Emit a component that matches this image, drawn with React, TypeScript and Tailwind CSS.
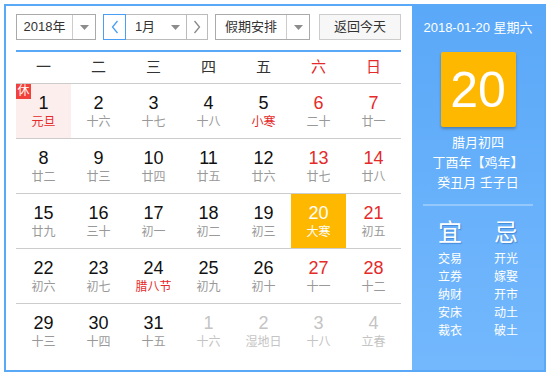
import React from 'react';

type Day = {
  d: number;
  l: string;
  weekend?: boolean;
  fest?: boolean;
  other?: boolean;
  today?: boolean;
  rest?: boolean;
};

const rows: Day[][] = [
  [
    { d: 1, l: '元旦', fest: true, rest: true },
    { d: 2, l: '十六' },
    { d: 3, l: '十七' },
    { d: 4, l: '十八' },
    { d: 5, l: '小寒', fest: true },
    { d: 6, l: '二十', weekend: true },
    { d: 7, l: '廿一', weekend: true },
  ],
  [
    { d: 8, l: '廿二' },
    { d: 9, l: '廿三' },
    { d: 10, l: '廿四' },
    { d: 11, l: '廿五' },
    { d: 12, l: '廿六' },
    { d: 13, l: '廿七', weekend: true },
    { d: 14, l: '廿八', weekend: true },
  ],
  [
    { d: 15, l: '廿九' },
    { d: 16, l: '三十' },
    { d: 17, l: '初一' },
    { d: 18, l: '初二' },
    { d: 19, l: '初三' },
    { d: 20, l: '大寒', today: true },
    { d: 21, l: '初五', weekend: true },
  ],
  [
    { d: 22, l: '初六' },
    { d: 23, l: '初七' },
    { d: 24, l: '腊八节', fest: true },
    { d: 25, l: '初九' },
    { d: 26, l: '初十' },
    { d: 27, l: '十一', weekend: true },
    { d: 28, l: '十二', weekend: true },
  ],
  [
    { d: 29, l: '十三' },
    { d: 30, l: '十四' },
    { d: 31, l: '十五' },
    { d: 1, l: '十六', other: true },
    { d: 2, l: '湿地日', other: true },
    { d: 3, l: '十八', other: true },
    { d: 4, l: '立春', other: true },
  ],
];

const weekdays = ['一', '二', '三', '四', '五', '六', '日'];
const yi = ['交易', '立券', '纳财', '安床', '裁衣'];
const ji = ['开光', '嫁娶', '开市', '动土', '破土'];

function Caret() {
  return (
    <svg width="9" height="5" viewBox="0 0 9 5">
      <path d="M0 0 L9 0 L4.5 5 Z" fill="#8c8c8c" />
    </svg>
  );
}

function Chevron({ dir, color }: { dir: 'l' | 'r'; color: string }) {
  return (
    <svg width="8" height="14" viewBox="0 0 8 14">
      <polyline
        points={dir === 'l' ? '6.5,1 1.5,7 6.5,13' : '1.5,1 6.5,7 1.5,13'}
        fill="none"
        stroke={color}
        strokeWidth="1.3"
      />
    </svg>
  );
}

function Cell({ day }: { day: Day }) {
  let bg = '';
  let num = 'text-[#111]';
  let lunar = 'text-[#999]';
  if (day.rest) bg = 'bg-[#fdeeee]';
  if (day.today) {
    bg = 'bg-[#ffb800]';
    num = 'text-white';
    lunar = 'text-white';
  }
  if (day.weekend) num = 'text-[#e52a2a]';
  if (day.fest) lunar = 'text-[#e52a2a]';
  if (day.other) {
    num = 'text-[#c4c4c4]';
    lunar = 'text-[#c4c4c4]';
  }
  return (
    <div className={`relative w-[55px] h-[54px] flex flex-col items-center pt-[9px] ${bg}`}>
      {day.rest && (
        <span className="absolute left-0 top-0 w-[15px] h-[15px] bg-[#f2413b] text-white text-[12px] leading-[15px] text-center">
          休
        </span>
      )}
      <span className={`text-[18px] leading-[20px] ${num}`}>{day.d}</span>
      <span className={`text-[12px] leading-[16px] mt-[1px] ${lunar}`}>{day.l}</span>
    </div>
  );
}

export default function App() {
  return (
    <div className="w-[546px] h-[374px] bg-white pl-[4px] pt-[4px] font-['Liberation_Sans','Noto_Sans_CJK_SC',sans-serif]">
      <div className="w-[542px] h-[368px] border-2 border-[#5aa9f8] flex">
        {/* left: calendar */}
        <div className="w-[406px] pl-[10px] pt-[8px]">
          <div className="flex h-[26px] text-[13px] text-[#333]">
            <div className="w-[80px] flex border border-[#aaa]">
              <div className="w-[55px] flex items-center justify-center">2018年</div>
              <div className="flex-1 flex items-center justify-center border-l border-[#ccc]">
                <Caret />
              </div>
            </div>
            <div className="ml-[7px] flex">
              <div className="w-[23px] flex items-center justify-center border border-[#4a9ef5]">
                <Chevron dir="l" color="#4a9ef5" />
              </div>
              <div className="w-[60px] flex items-center border-y border-[#bbb]">
                <span className="w-[38px] text-center">1月</span>
                <span className="flex-1 flex justify-center">
                  <Caret />
                </span>
              </div>
              <div className="w-[22px] flex items-center justify-center border border-[#bbb]">
                <Chevron dir="r" color="#888" />
              </div>
            </div>
            <div className="ml-[7px] w-[95px] flex border border-[#aaa]">
              <div className="w-[70px] flex items-center justify-center">假期安排</div>
              <div className="flex-1 flex items-center justify-center border-l border-[#ccc]">
                <Caret />
              </div>
            </div>
            <div className="ml-[9px] w-[82px] flex items-center justify-center border border-[#ccc] bg-[#f7f7f7]">
              返回今天
            </div>
          </div>
          <div className="w-[385px] mt-[10px] border-t-2 border-[#5aa9f8]">
            <div className="flex h-[32px] border-b border-[#ccc]">
              {weekdays.map((w, i) => (
                <div
                  key={w}
                  className={`w-[55px] flex items-center justify-center text-[15px] ${
                    i >= 5 ? 'text-[#e52a2a]' : 'text-[#333]'
                  }`}
                >
                  {w}
                </div>
              ))}
            </div>
            {rows.map((r, i) => (
              <div
                key={i}
                className={`flex ${i < rows.length - 1 ? 'border-b border-[#ccc]' : ''}`}
              >
                {r.map((d, j) => (
                  <Cell key={j} day={d} />
                ))}
              </div>
            ))}
          </div>
        </div>

        {/* right: detail panel */}
        <div className="flex-1 bg-gradient-to-b from-[#5aa8f8] to-[#73b8fd] flex flex-col items-center pt-[14px] text-white">
          <div className="text-[13px] leading-[16px]">2018-01-20 星期六</div>
          <div className="mt-[16px] w-[75px] h-[75px] bg-[#ffb800] rounded-[2px] shadow-[0_2px_3px_rgba(0,0,0,0.25)] flex items-center justify-center text-[50px] leading-none">
            20
          </div>
          <div className="mt-[6px] text-[13px] leading-[20px] text-center">
            <div>腊月初四</div>
            <div>丁酉年【鸡年】</div>
            <div>癸丑月 壬子日</div>
          </div>
          <div className="mt-[11px] w-[110px] h-[2px] bg-white/30" />
          <div className="mt-[13px] flex">
            <div className="w-[56px] flex flex-col items-center">
              <div className="text-[24px] leading-[28px] [text-shadow:1px_1px_1px_rgba(0,60,140,0.35)]">宜</div>
              <div className="mt-[3px] text-[12px] leading-[18px] text-center">
                {yi.map((t) => (
                  <div key={t}>{t}</div>
                ))}
              </div>
            </div>
            <div className="w-[56px] flex flex-col items-center">
              <div className="text-[24px] leading-[28px] [text-shadow:1px_1px_1px_rgba(0,60,140,0.35)]">忌</div>
              <div className="mt-[3px] text-[12px] leading-[18px] text-center">
                {ji.map((t) => (
                  <div key={t}>{t}</div>
                ))}
              </div>
            </div>
          </div>
        </div>
      </div>
    </div>
  );
}
